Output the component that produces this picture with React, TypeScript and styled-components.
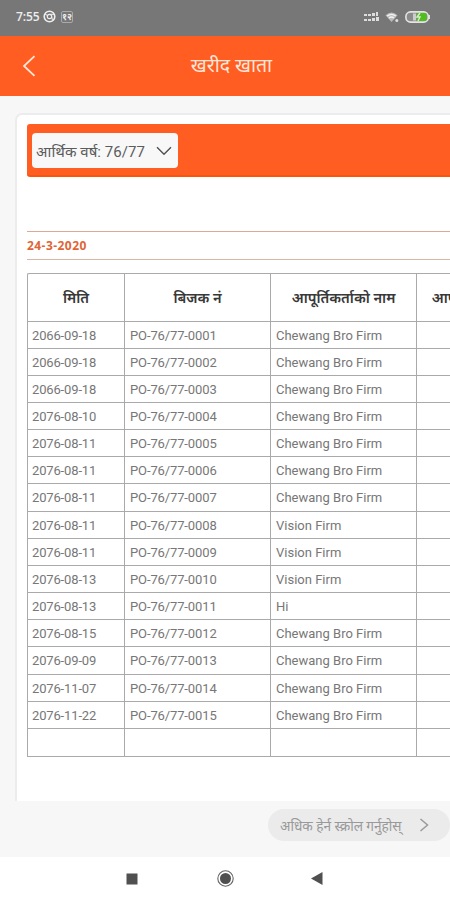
import React from 'react';
import styled, { createGlobalStyle } from 'styled-components';

const GlobalStyle = createGlobalStyle`
  * { box-sizing: border-box; }
  html, body { margin: 0; padding: 0; overflow: hidden; }
  body { font-family: Roboto, "Noto Sans", "Noto Sans Devanagari", sans-serif; background: #fff; }
`;

const Screen = styled.div`
  width: 450px;
  height: 900px;
  display: flex;
  flex-direction: column;
  overflow: hidden;
  background: #f7f7f7;
`;

const StatusBar = styled.div`
  height: 36px;
  flex: none;
  display: flex;
  align-items: center;
  justify-content: space-between;
  padding: 0 20px 3px 16px;
  background: #777;
  color: #eee;
`;

const StatusGroup = styled.div<{ $gap: number }>`
  display: flex;
  align-items: center;
  gap: ${(p) => p.$gap}px;
`;

const Clock = styled.span`
  width: 25px;
  font: 600 12px/16px "Open Sans", sans-serif;
  letter-spacing: -0.1px;
  white-space: nowrap;
`;

const DateBadge = styled.span`
  width: 12px;
  height: 12px;
  margin-left: 3px;
  border: 1px solid #aaa;
  border-radius: 2px;
  font-size: 9px;
  line-height: 11px;
  font-weight: 700;
  display: flex;
  justify-content: center;
`;

const AppBar = styled.header`
  height: 60px;
  flex: none;
  display: grid;
  grid-template-columns: 60px 1fr 60px;
  align-items: center;
  background: #ff5d22;
  color: #ffe6d8;
`;

const BackButton = styled.button`
  display: flex;
  padding: 0 0 0 22px;
  border: 0;
  background: none;
  color: inherit;
`;

const Title = styled.h1`
  margin: 0;
  padding-left: 13px;
  text-align: center;
  font-weight: 400;
  font-size: 19.5px;
  line-height: 30px;
  white-space: nowrap;
`;

const Content = styled.main`
  height: 705px;
  flex: none;
  padding: 17px 0 0 15px;
`;

const Card = styled.section`
  height: 688px;
  width: 435px;
  overflow: hidden;
  padding: 9px 0 0 10px;
  border-left: 2px solid #ececec;
  border-top: 2px solid #ececec;
  border-top-left-radius: 7px;
  background: #fff;
`;

const FilterBar = styled.div`
  height: 53px;
  padding: 9px 5px;
  border-radius: 3px 0 0 3px;
  background: #ff5d22;
  border-bottom: 2px solid #f8560f;
`;

const YearSelect = styled.button`
  width: 146px;
  height: 35px;
  padding: 0 6px 0 4px;
  display: flex;
  align-items: center;
  justify-content: space-between;
  border: 0;
  border-radius: 4px;
  background: #f8f8f8;
  color: #5c5c5c;
  font-family: inherit;
  font-size: 15px;
  white-space: nowrap;
`;

const YearLabel = styled.span`
  letter-spacing: 0.05px;
`;

const DateStrip = styled.div`
  height: 29px;
  margin-top: 54px;
  border-top: 1px solid #dba994;
  border-bottom: 1px solid #dcb5a4;
  color: #df6535;
  font: 700 12px/27px "Open Sans", sans-serif;
  letter-spacing: 0.45px;
`;

const Ledger = styled.div`
  width: 536px;
  margin-top: 13px;
  border: 1px solid #aaa;
  border-right: 0;
  border-top-left-radius: 2px;
`;

const LedgerRow = styled.div<{ $head?: boolean }>`
  display: grid;
  grid-template-columns: 97px 146px 146px 146px;
  height: ${(p) => (p.$head ? '47.5px' : '27.16px')};
  border-bottom: 1px solid #aaa;
  &:last-child { border-bottom: 0; }
`;

const Cell = styled.div<{ $spacing?: number }>`
  padding: 0 0 0 5px;
  border-right: 1px solid #aaa;
  font-size: 13px;
  line-height: 27px;
  letter-spacing: ${(p) => p.$spacing ?? 0}px;
  color: #777;
  white-space: nowrap;
  &:first-child { padding-left: 4px; }
`;

const HeadCell = styled.div`
  display: flex;
  align-items: center;
  justify-content: center;
  border-right: 1px solid #aaa;
  font-size: 14.6px;
  font-weight: 600;
  color: #383838;
  white-space: nowrap;
`;

const Footer = styled.div`
  height: 56px;
  flex: none;
  display: flex;
  justify-content: flex-end;
  padding-top: 8px;
`;

const ScrollHint = styled.div`
  width: 182px;
  height: 32px;
  border-radius: 16px;
  background: #ebebeb;
  color: #999;
  display: flex;
  align-items: center;
  justify-content: space-between;
  padding: 0 21px 0 12px;
  font-size: 13.65px;
  white-space: nowrap;
`;

const NavBar = styled.nav`
  height: 43px;
  flex: none;
  display: flex;
  align-items: center;
  padding-left: 126px;
  gap: 79px;
  background: #fff;
`;

const BackTriangle = styled.svg`
  margin-left: -2px;
`;

const purchases: [string, string, string][] = [
  ['2066-09-18', 'PO-76/77-0001', 'Chewang Bro Firm'],
  ['2066-09-18', 'PO-76/77-0002', 'Chewang Bro Firm'],
  ['2066-09-18', 'PO-76/77-0003', 'Chewang Bro Firm'],
  ['2076-08-10', 'PO-76/77-0004', 'Chewang Bro Firm'],
  ['2076-08-11', 'PO-76/77-0005', 'Chewang Bro Firm'],
  ['2076-08-11', 'PO-76/77-0006', 'Chewang Bro Firm'],
  ['2076-08-11', 'PO-76/77-0007', 'Chewang Bro Firm'],
  ['2076-08-11', 'PO-76/77-0008', 'Vision Firm'],
  ['2076-08-11', 'PO-76/77-0009', 'Vision Firm'],
  ['2076-08-13', 'PO-76/77-0010', 'Vision Firm'],
  ['2076-08-13', 'PO-76/77-0011', 'Hi'],
  ['2076-08-15', 'PO-76/77-0012', 'Chewang Bro Firm'],
  ['2076-09-09', 'PO-76/77-0013', 'Chewang Bro Firm'],
  ['2076-11-07', 'PO-76/77-0014', 'Chewang Bro Firm'],
  ['2076-11-22', 'PO-76/77-0015', 'Chewang Bro Firm'],
  ['', '', ''],
];

const headings = ['मिति', 'बिजक नं', 'आपूर्तिकर्ताको नाम', 'आपूर्तिकर्ताको पान नं'];

const BrowserIcon = () => (
  <svg width="13" height="13" viewBox="0 0 13 13" fill="none" stroke="#eee">
    <circle cx="6.5" cy="6.5" r="5.3" strokeWidth="1.6" />
    <circle cx="6.5" cy="6.5" r="2.2" strokeWidth="1.2" />
    <path d="M4.5 5.5 2 4M8.7 6.5l.8 4M6.5 4.3h4.5" />
  </svg>
);

const SignalIcon = () => (
  <svg width="15" height="12" viewBox="0 0 15 12" fill="#ddd">
    <path d="M0 3h3v2H0zM4 3h3v2H4zM8 2h3v3H8zM12 1h2v4h-2zM0 8h3v2H0zM4 8h3v2H4zM8 7h3v3H8zM12 6h3v4h-3z" />
  </svg>
);

const WifiIcon = () => (
  <svg width="14" height="12" viewBox="0 0 14 12">
    <path d="M.5 4.2Q6.5-1.4 12.5 4.2L6.5 11Z" fill="#bbb" />
    <path d="M2.3 5.1Q6.5 1.7 10.7 5.1M4 7Q6.5 5 9 7" fill="none" stroke="#f3f3f3" strokeWidth="1.3" />
    <circle cx="11.8" cy="9.5" r="1.5" fill="#ddd" />
  </svg>
);

const BatteryIcon = () => (
  <svg width="25" height="12" viewBox="0 0 25 12">
    <path d="M23 4h2v4h-2z" fill="#ddd" />
    <rect x=".9" y=".9" width="22.4" height="10.2" rx="4.6" fill="#8b8b8b" stroke="#e4e4e4" strokeWidth="1.6" />
    <path d="M12 2h7.5q2.3 0 2.3 2v4q0 2-2.3 2H12z" fill="#50be1d" />
    <path d="M8 2.5h3v7H8z" fill="#ccc" />
    <path d="m15 2-3 4h3l-2 4" fill="none" stroke="#d4f1c6" strokeWidth="1.4" />
  </svg>
);

export default function App() {
  return (
    <>
      <GlobalStyle />
      <Screen>
        <StatusBar>
          <StatusGroup $gap={2}>
            <Clock>7:55</Clock>
            <BrowserIcon />
            <DateBadge>१२</DateBadge>
          </StatusGroup>
          <StatusGroup $gap={6}>
            <SignalIcon />
            <WifiIcon />
            <BatteryIcon />
          </StatusGroup>
        </StatusBar>
        <AppBar>
          <BackButton aria-label="Back">
            <svg width="14" height="22" viewBox="0 0 14 22" fill="none" stroke="currentColor" strokeWidth="1.8">
              <path d="M12.5 1.2 2 11l10.5 9.8" />
            </svg>
          </BackButton>
          <Title>खरीद खाता</Title>
        </AppBar>
        <Content>
          <Card>
            <FilterBar>
              <YearSelect>
                <YearLabel>आर्थिक वर्ष: 76/77</YearLabel>
                <svg width="16" height="10" viewBox="0 0 16 10" fill="none" stroke="#555" strokeWidth="1.5">
                  <path d="m1 1.2 7 7 7-7" />
                </svg>
              </YearSelect>
            </FilterBar>
            <DateStrip>24-3-2020</DateStrip>
            <Ledger>
              <LedgerRow $head>
                {headings.map((h) => (
                  <HeadCell key={h}>{h}</HeadCell>
                ))}
              </LedgerRow>
              {purchases.map(([date, bill, supplier], i) => (
                <LedgerRow key={i}>
                  <Cell $spacing={-0.15}>{date}</Cell>
                  <Cell $spacing={-0.12}>{bill}</Cell>
                  <Cell>{supplier}</Cell>
                  <Cell />
                </LedgerRow>
              ))}
            </Ledger>
          </Card>
        </Content>
        <Footer>
          <ScrollHint>
            <span>अधिक हेर्न स्क्रोल गर्नुहोस्</span>
            <svg width="10" height="14" viewBox="0 0 10 14" fill="none" stroke="#999" strokeWidth="1.5">
              <path d="m1.5 1 7 6-7 6" />
            </svg>
          </ScrollHint>
        </Footer>
        <NavBar>
          <svg width="12" height="12" viewBox="0 0 12 12">
            <rect x=".5" y=".5" width="11" height="11" fill="#505050" />
          </svg>
          <svg width="17" height="17" viewBox="0 0 17 17">
            <circle cx="8.5" cy="8.5" r="7.7" fill="none" stroke="#666" strokeWidth="1.1" />
            <circle cx="8.5" cy="8.5" r="5.5" fill="#505050" />
          </svg>
          <BackTriangle width="12" height="13" viewBox="0 0 12 13">
            <path d="M11.5 0v13L0 6.5z" fill="#505050" />
          </BackTriangle>
        </NavBar>
      </Screen>
    </>
  );
}
